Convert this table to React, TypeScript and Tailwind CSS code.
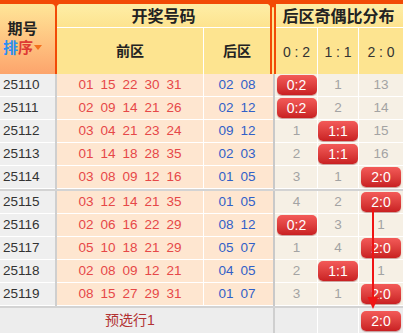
import React from "react";

type Ratio = number | "0:2" | "1:1" | "2:0";

interface Row {
  issue: string;
  front: string[];
  back: string[];
  ratio: [Ratio, Ratio, Ratio];
}

const group1: Row[] = [
  { issue: "25110", front: ["01", "15", "22", "30", "31"], back: ["02", "08"], ratio: ["0:2", 1, 13] },
  { issue: "25111", front: ["02", "09", "14", "21", "26"], back: ["02", "12"], ratio: ["0:2", 2, 14] },
  { issue: "25112", front: ["03", "04", "21", "23", "24"], back: ["09", "12"], ratio: [1, "1:1", 15] },
  { issue: "25113", front: ["01", "14", "18", "28", "35"], back: ["02", "03"], ratio: [2, "1:1", 16] },
  { issue: "25114", front: ["03", "08", "09", "12", "16"], back: ["01", "05"], ratio: [3, 1, "2:0"] },
];

const group2: Row[] = [
  { issue: "25115", front: ["03", "12", "14", "21", "35"], back: ["01", "05"], ratio: [4, 2, "2:0"] },
  { issue: "25116", front: ["02", "06", "16", "22", "29"], back: ["08", "12"], ratio: ["0:2", 3, 1] },
  { issue: "25117", front: ["05", "10", "18", "21", "29"], back: ["05", "07"], ratio: [1, 4, "2:0"] },
  { issue: "25118", front: ["02", "08", "09", "12", "21"], back: ["04", "05"], ratio: [2, "1:1", 1] },
  { issue: "25119", front: ["08", "15", "27", "29", "31"], back: ["01", "07"], ratio: [3, 1, "2:0"] },
];

const numFont = { fontFamily: '"Liberation Sans", Arial, sans-serif' };
const cjkFont = { fontFamily: '"Liberation Sans", "Noto Sans CJK SC", sans-serif' };

function Badge({ label }: { label: string }) {
  return (
    <span className="inline-flex items-center justify-center w-[40px] h-[20px] rounded-[5px] bg-linear-to-b from-[#f35a58] to-[#c91f22] text-white text-[14px] leading-none shadow-[0_1px_1px_rgba(120,0,0,0.35)]">
      {label}
    </span>
  );
}

function RatioCell({ value, width }: { value: Ratio | null; width: string }) {
  return (
    <div className={`${width} h-full flex items-center justify-center`}>
      {typeof value === "string" ? (
        <Badge label={value} />
      ) : value !== null ? (
        <span className="text-[13.5px] text-[#a3a3a3]">{value}</span>
      ) : null}
    </div>
  );
}

function DataRow({ row }: { row: Row }) {
  return (
    <div className="flex h-[23px]" style={numFont}>
      <div className="w-[55px] h-full bg-[#efefef] border-b border-white flex items-center pl-[3px] text-[13.5px] text-[#333]">
        {row.issue}
      </div>
      <div className="w-[2px] h-full bg-[#cfcfcf]" />
      <div className="w-[146px] h-full bg-[#fee6d0] border-b border-white flex items-center justify-center gap-[7px] text-[13.5px] text-[#e64848]">
        {row.front.map((n, i) => (
          <span key={i}>{n}</span>
        ))}
      </div>
      <div className="w-[1px] h-full bg-white" />
      <div className="w-[66px] h-full bg-[#fee6d0] border-b border-white flex items-center justify-center gap-[7px] text-[13.5px] text-[#3160c8]">
        {row.back.map((n, i) => (
          <span key={i}>{n}</span>
        ))}
      </div>
      <div className="w-[3px] h-full bg-[#fee6d0] border-b border-white" />
      <div className="w-[2px] h-full bg-[#c9c9c9]" />
      <div className="flex-1 flex h-full bg-[#f6f0e5] border-b border-white pl-[1px]">
        <RatioCell value={row.ratio[0]} width="w-[41px]" />
        <div className="w-[1px] h-full bg-white" />
        <RatioCell value={row.ratio[1]} width="w-[40px]" />
        <div className="w-[1px] h-full bg-white" />
        <RatioCell value={row.ratio[2]} width="flex-1" />
      </div>
    </div>
  );
}

export default function App() {
  return (
    <div className="relative w-[403px] h-[333px] overflow-hidden bg-white" style={cjkFont}>
      {/* Header */}
      <div className="flex h-[74px] bg-[#f24a06] pt-[4px]">
        <div className="w-[55px] h-full rounded-tr-[4px] bg-linear-to-b from-[#fee698] to-[#fca46c] flex flex-col items-center pr-[10px] pt-[15px] font-bold text-[15px] leading-[19px]">
          <span className="text-[#222]">期号</span>
          <span className="flex items-center">
            <span className="text-[#2a8ff2]">排</span>
            <span className="text-[#de3b34]">序</span>
            <span className="ml-[1px] w-0 h-0 border-l-[4px] border-r-[4px] border-t-[5px] border-l-transparent border-r-transparent border-t-[#f3701c]" />
          </span>
        </div>
        <div className="w-[2px]" />
        <div className="w-[213px] h-full rounded-t-[4px] bg-[#fde490] flex flex-col overflow-hidden">
          <div className="h-[23px] bg-linear-to-b from-[#feeea6] to-[#fde38f] flex items-center justify-center pt-[2px] text-[16px] font-bold text-[#222]">
            开奖号码
          </div>
          <div className="h-[1px] bg-white" />
          <div className="flex-1 flex text-[14px] font-bold text-[#222]">
            <div className="w-[146px] flex items-center justify-center">前区</div>
            <div className="w-[1px] bg-white" />
            <div className="flex-1 flex items-center justify-center">后区</div>
          </div>
        </div>
        <div className="w-[2px]" />
        <div className="w-[2px] h-full mt-[3px] rounded-t-[2px] bg-[#fde490]" />
        <div className="w-[2px]" />
        <div className="flex-1 h-full rounded-tl-[4px] bg-[#fde490] flex flex-col">
          <div className="h-[23px] bg-linear-to-b from-[#feeea6] to-[#fde38f] flex items-center justify-center pt-[2px] pr-[2px] text-[16px] font-bold text-[#222]">
            后区奇偶比分布
          </div>
          <div className="h-[1px] bg-white" />
          <div className="flex-1 flex text-[14px] text-[#333]" style={numFont}>
            <div className="w-[41px] flex items-center justify-center pt-[2px] whitespace-pre">0 : 2</div>
            <div className="w-[1px] bg-white" />
            <div className="w-[40px] flex items-center justify-center pt-[2px] whitespace-pre">1 : 1</div>
            <div className="w-[1px] bg-white" />
            <div className="flex-1 flex items-center justify-center pt-[2px] whitespace-pre">2 : 0</div>
          </div>
        </div>
      </div>

      {group1.map((r) => (
        <DataRow key={r.issue} row={r} />
      ))}
      <div className="h-[2px] bg-[#d3d3d3]" />
      {group2.map((r) => (
        <DataRow key={r.issue} row={r} />
      ))}
      <div className="h-[2px] bg-[#d3d3d3]" />

      {/* Footer */}
      <div className="flex h-[25px] bg-[#ededed]">
        <div className="w-[57px]" />
        <div className="w-[146px] flex items-center justify-center text-[14px] text-[#b23232]">预选行1</div>
        <div className="w-[67px]" />
        <div className="w-[3px]" />
        <div className="w-[2px] bg-[#cfcfcf]" />
        <div className="flex-1 flex pl-[1px]">
          <RatioCell value={null} width="w-[41px]" />
          <div className="w-[1px] h-full bg-white" />
          <RatioCell value={null} width="w-[40px]" />
          <div className="w-[1px] h-full bg-white" />
          <RatioCell value="2:0" width="flex-1" />
        </div>
      </div>

      {/* trend arrow */}
      <svg className="absolute left-0 top-0 pointer-events-none" width="403" height="333">
        <line x1="373" y1="208" x2="373" y2="299" stroke="#f01414" strokeWidth="2" />
        <polygon points="367.5,297 378.5,297 373,309" fill="#f01414" />
      </svg>
    </div>
  );
}
